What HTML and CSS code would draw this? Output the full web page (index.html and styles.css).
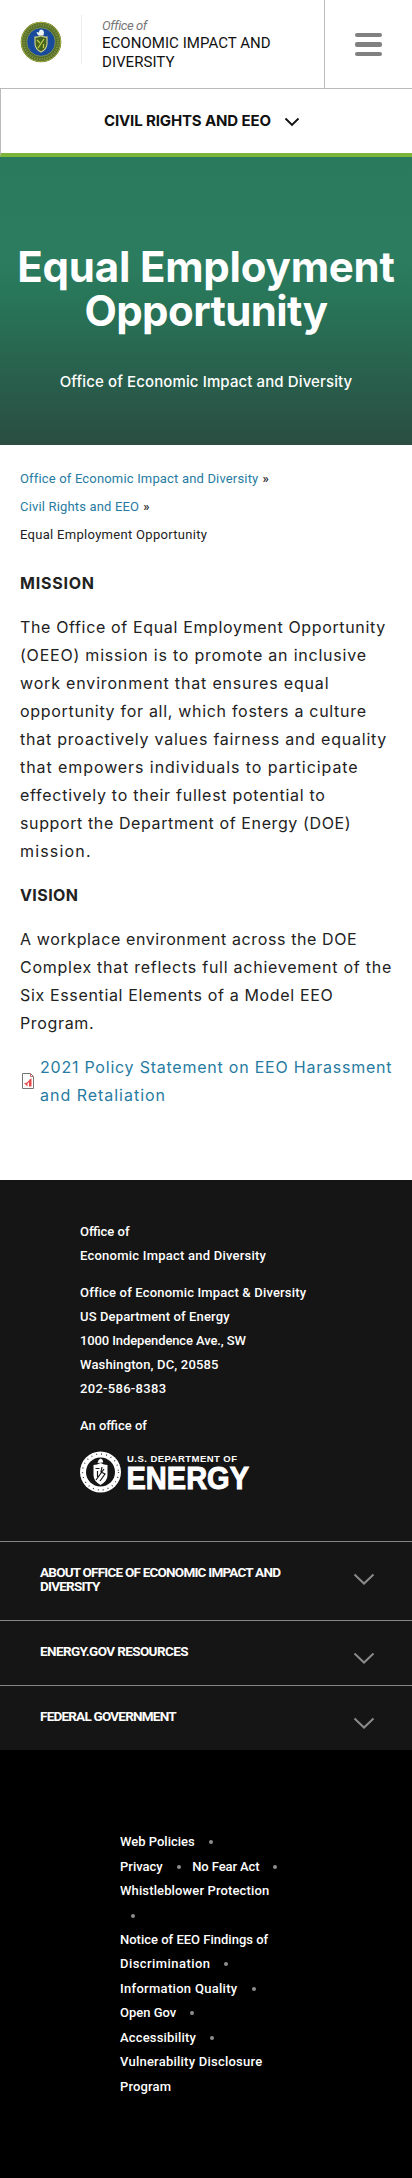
FILE: index.html
```html
<!DOCTYPE html>
<html lang="en">
<head>
<meta charset="utf-8">
<title>Equal Employment Opportunity</title>
<link rel="stylesheet" href="styles.css">
</head>
<body>
<header class="masthead">
  <a class="brand">
    <svg class="seal" viewBox="0 0 42 42" width="42" height="42">
      <circle cx="21" cy="21" r="20.3" fill="#56702b"/>
      <circle cx="21" cy="21" r="19.6" fill="none" stroke="#a5ab3f" stroke-width="1"/>
      <circle cx="21" cy="21" r="17.2" fill="none" stroke="#7f9140" stroke-width="2.400" stroke-dasharray="1.2 1.3"/>
      <circle cx="21" cy="21" r="14.300" fill="#184b9c" stroke="#8f9c4a" stroke-width=".8"/>
      <path d="M18.500 14.500q-1.500-1.500-2-3.500l2.500.5q0-3 2.500-3 2.500.5 2.500 3l-.5 3z" fill="#eef3f5"/>
      <path d="M15 16q3 .4 6-1.200 3 1.600 6 1.200v6.500q0 5.500-6 8.500-6-3-6-8.500z" fill="#45651f" stroke="#d9d68b" stroke-width="1.100"/>
      <path d="M18 27l6-9M17 19l3 3M23.500 23v4" stroke="#c9cf4b" stroke-width="1.200" fill="none"/>
    </svg>
    <span class="rule"></span>
    <span class="office">
      <span class="office-of">Office of</span>
      <span>ECONOMIC IMPACT AND</span>
      <span>DIVERSITY</span>
    </span>
  </a>
  <div class="burger"><i></i><i></i><i></i></div>
</header>
<nav class="subnav">
  <span>CIVIL RIGHTS AND EEO</span>
  <svg viewBox="0 0 16 10" width="16" height="10"><path d="M1.500 1.500 8 8l6.500-6.500" fill="none" stroke="#111" stroke-width="1.900"/></svg>
</nav>
<section class="hero">
  <h1><span class="h1-a">Equal Employment</span><span class="h1-b">Opportunity</span></h1>
  <p>Office of Economic Impact and Diversity</p>
</section>
<main class="content">
  <div class="crumbs">
    <span class="row"><a class="ls-17">Office of Economic Impact and Diversity</a><b>»</b></span>
    <span class="row"><a class="ls-17">Civil Rights and EEO</a><b>»</b></span>
    <span class="row ls-30">Equal Employment Opportunity</span>
  </div>
  <h3 class="ls-77">MISSION</h3>
  <p>
    <span class="row ls-65">The Office of Equal Employment Opportunity</span>
    <span class="row ls-78">(OEEO) mission is to promote an inclusive</span>
    <span class="row ls-83">work environment that ensures equal</span>
    <span class="row ls-70">opportunity for all, which fosters a culture</span>
    <span class="row ls-77">that proactively values fairness and equality</span>
    <span class="row ls-92">that empowers individuals to participate</span>
    <span class="row ls-73">effectively to their fullest potential to</span>
    <span class="row ls-61">support the Department of Energy (DOE)</span>
    <span class="row ls-117">mission.</span>
  </p>
  <h3 class="ls-41">VISION</h3>
  <p>
    <span class="row ls-61">A workplace environment across the DOE</span>
    <span class="row ls-74">Complex that reflects full achievement of the</span>
    <span class="row ls-65">Six Essential Elements of a Model EEO</span>
    <span class="row ls-65">Program.</span>
  </p>
  <div class="download">
    <svg viewBox="0 0 12 16" width="12" height="16">
      <path d="M.5.5h8l3 3v12H.5z" fill="#fff" stroke="#777"/>
      <path d="M8.500.5v3h3" fill="none" stroke="#c66"/>
      <path d="M2 10.500q3.500-.5 6-4.500l1.500-.5v8H7V9L5.500 10.500v3L4 12z" fill="#e84a4a"/>
    </svg>
    <a><span class="row ls-77">2021 Policy Statement on EEO Harassment</span><span class="row ls-98">and Retaliation</span></a>
  </div>
</main>
<footer>
  <div class="address">
    <p><span class="row">Office of</span><span class="row ls-23">Economic Impact and Diversity</span></p>
    <p>
      <span class="row ls-17">Office of Economic Impact &amp; Diversity</span>
      <span class="row ls-13">US Department of Energy</span>
      <span class="row ls-n11">1000 Independence Ave., SW</span>
      <span class="row ls-17">Washington, DC, 20585</span>
      <span class="row ls-30">202-586-8383</span>
    </p>
    <p><span class="row">An office of</span></p>
    <svg class="doe" viewBox="0 0 170 42" width="170" height="42">
      <circle cx="20.500" cy="21" r="20.500" fill="#fff"/>
      <circle cx="20.500" cy="21" r="18" fill="none" stroke="#151515" stroke-width="1.300" stroke-dasharray=".8 4.200"/>
      <circle cx="20.500" cy="21" r="14.500" fill="#151515"/>
      <path d="M17.500 12q.5-3.500 3-4.500 3 1 2.500 4z" fill="#fff"/>
      <path d="M13.500 14q3.500 0 7-2 3.500 2 7 2v10q0 6-7 10-7-4-7-10z" fill="#fff"/>
      <path d="M15.500 17.500h4M17.500 20v6M22 16l-1 5 4 2-5 7M16 29l8-11" stroke="#151515" stroke-width="1.200" fill="none"/>
      <text class="doe-top" x="47" y="10.500" textLength="110">U.S. DEPARTMENT OF</text>
      <text class="doe-main" x="46.500" y="37.500" textLength="122.500" lengthAdjust="spacingAndGlyphs">ENERGY</text>
    </svg>
  </div>
  <div class="panel tall"><h4><span>ABOUT OFFICE OF ECONOMIC IMPACT AND</span><span>DIVERSITY</span></h4><svg viewBox="0 0 22 13" width="22" height="13"><path d="M1.500 1.500 11 10.500l9.500-9" fill="none" stroke="#8a8a8a" stroke-width="2"/></svg></div>
  <div class="panel"><h4><span class="ls-n61">ENERGY.GOV RESOURCES</span></h4><svg viewBox="0 0 22 13" width="22" height="13"><path d="M1.500 1.500 11 10.500l9.500-9" fill="none" stroke="#8a8a8a" stroke-width="2"/></svg></div>
  <div class="panel"><h4><span>FEDERAL GOVERNMENT</span></h4><svg viewBox="0 0 22 13" width="22" height="13"><path d="M1.500 1.500 11 10.500l9.500-9" fill="none" stroke="#8a8a8a" stroke-width="2"/></svg></div>
  <div class="legal">
    <div class="line"><a>Web Policies</a><i></i></div>
    <div class="line"><a>Privacy</a><i></i><a class="ls-n11">No Fear Act</a><i></i></div>
    <div class="line"><a class="ls-13">Whistleblower Protection</a></div>
    <div class="line lone"><i></i></div>
    <div class="line"><a>Notice of EEO Findings of</a></div>
    <div class="line"><a class="ls-44">Discrimination</a><i></i></div>
    <div class="line"><a class="ls-30">Information Quality</a><i></i></div>
    <div class="line"><a>Open Gov</a><i></i></div>
    <div class="line"><a class="ls-17">Accessibility</a><i></i></div>
    <div class="line"><a class="ls-23">Vulnerability Disclosure</a></div>
    <div class="line"><a class="ls-13">Program</a></div>
  </div>
</footer>
</body>
</html>
```
FILE: styles.css
```css
* { box-sizing: border-box; }
body { margin: 0; background: #fff; color: #222; font: 16px/28px Inter, sans-serif; }
h1, h3, h4, p { margin: 0; }
svg { display: block; flex: none; }
.row { display: block; white-space: nowrap; }

.masthead { display: flex; height: 89px; border-bottom: 1px solid #bbb; }
.brand { display: flex; width: 325px; padding: 15px 0 0 20px; border-right: 1px solid #bbb; }
.seal { margin-top: 6px; }
.rule { width: 1px; height: 49px; margin: 0 20px 0 19px; background: #eee; }
.office { padding-top: 3px; color: #111; font: 15px/19px Roboto, sans-serif; letter-spacing: .04px; white-space: nowrap; }
.office span { display: block; }
.office .office-of { color: #777; font-size: 13px; font-style: italic; line-height: 16px; letter-spacing: -.44px; }
.burger { display: flex; flex: 1; flex-direction: column; gap: 5px; padding: 33px 0 0 30px; }
.burger i { width: 27px; height: 4.400px; border-radius: 2px; background: #808080; }

.subnav { display: flex; align-items: flex-start; gap: 13px; height: 68px; padding: 22px 0 0 103px; border-left: 1px solid #bbb; border-bottom: 4px solid #7db53a; color: #111; font-size: 15px; font-weight: 700; line-height: 20px; letter-spacing: -.13px; }
.subnav svg { margin-top: 6px; }

.hero { height: 288px; padding-top: 88px; color: #fff; text-align: center; background: linear-gradient(#2a7b5e 0%, #2c7d60 35%, #287558 50%, #286650 68%, #2a4d42 100%); }
.hero h1 { font-size: 42px; line-height: 44px; letter-spacing: -.2px; white-space: nowrap; }
.hero h1 span { display: block; }
.hero .h1-b { letter-spacing: -.6px; }
.hero p { margin-top: 39px; font-size: 15px; font-weight: 500; line-height: 20px; letter-spacing: .11px; }

.content { padding: 20px 18px 71px 20px; }
.crumbs { margin-bottom: 20px; font: 13px/28px Roboto, sans-serif; }
.crumbs b { margin-left: 4px; font-weight: 500; }
.content a { color: #277ba2; }
.content h3 { margin-bottom: 16px; font-size: 16px; line-height: 28px; }
.content p { margin-bottom: 16px; }
.download { display: flex; gap: 6px; padding-left: 2px; }
.download svg { margin-top: 20px; }

footer { color: #fff; background: #151515; font: 500 13px/24px Roboto, sans-serif; }
.address { height: 361px; padding: 40px 0 0 80px; }
.address p { margin-bottom: 13px; }
.doe text { fill: #fff; font-family: "Liberation Sans", sans-serif; font-weight: 700; }
.doe-top { font-size: 9.500px; }
.doe .doe-main { font-size: 31.500px; stroke: #fff; stroke-width: 1px; }
.panel { display: flex; justify-content: space-between; height: 65px; padding: 23px 37px 0 40px; border-top: 1px solid #868686; }
.panel.tall { height: 79px; }
.panel h4 { font-size: 13.500px; font-weight: 700; line-height: 14px; letter-spacing: -.78px; white-space: nowrap; }
.panel h4 span { display: block; }
.panel svg { margin-top: 8px; }
.legal { height: 428px; padding: 80px 0 0 120px; background: #000; }
.line { display: flex; align-items: center; height: 24.450px; white-space: nowrap; }
.line i { width: 4px; height: 4px; margin: 0 11.500px 0 14px; border-radius: 50%; background: #8d8d8d; }
.line.lone i { margin-left: 11px; }

.ls-n61 { letter-spacing: -.61px; }
.ls-n11 { letter-spacing: -.11px; }
.ls-13 { letter-spacing: .13px; }
.ls-17 { letter-spacing: .17px; }
.ls-23 { letter-spacing: .23px; }
.ls-30 { letter-spacing: .3px; }
.ls-41 { letter-spacing: .41px; }
.ls-44 { letter-spacing: .44px; }
.ls-61 { letter-spacing: .61px; }
.ls-65 { letter-spacing: .65px; }
.ls-70 { letter-spacing: .7px; }
.ls-73 { letter-spacing: .73px; }
.ls-74 { letter-spacing: .74px; }
.ls-77 { letter-spacing: .77px; }
.ls-78 { letter-spacing: .78px; }
.ls-83 { letter-spacing: .83px; }
.ls-92 { letter-spacing: .92px; }
.ls-98 { letter-spacing: .98px; }
.ls-117 { letter-spacing: 1.170px; }
```
